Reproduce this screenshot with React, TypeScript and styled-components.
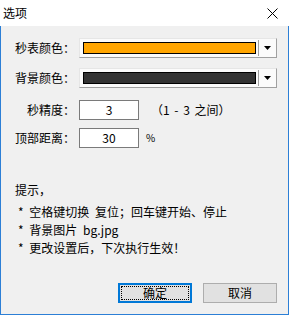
import React from "react";
import styled, { createGlobalStyle } from "styled-components";

const Global = createGlobalStyle`
  html, body { margin: 0; padding: 0; background: #f0f0f0; }
  body {
    font-family: "Noto Sans CJK SC", "Noto Sans", sans-serif;
    font-size: 12px;
    color: #000;
  }
`;

const Window = styled.div`
  width: 289px;
  height: 315px;
  display: flex;
  flex-direction: column;
  box-sizing: border-box;
  background: #fff;
  overflow: hidden;
`;

const TitleBar = styled.div`
  height: 26px;
  flex-shrink: 0;
  display: flex;
  align-items: center;
  justify-content: space-between;
  padding: 0 11px 0 3px;
  background: #fff;
`;

const Title = styled.span`
  font-size: 12px;
  line-height: 16px;
`;

const Client = styled.div`
  flex: 1;
  display: flex;
  flex-direction: column;
  background: #f0f0f0;
  border: 1px solid #2c7fd6;
  border-top: none;
  padding: 12px 11px 11px 14px;
`;

const Row = styled.div<{ $top: number }>`
  display: flex;
  align-items: center;
  height: 20px;
  margin-top: ${(p) => p.$top}px;
`;

const Label = styled.span`
  width: 60px;
  flex-shrink: 0;
  margin-right: 4px;
  text-align: right;
  line-height: 20px;
  white-space: nowrap;
`;

const Combo = styled.div`
  width: 198px;
  height: 20px;
  box-sizing: border-box;
  display: flex;
  align-items: center;
  padding: 3px 0 3px 3px;
  background: #fbfbfb;
  border: 1px solid #e6e6e6;
  border-right-color: #a0a0a0;
  border-bottom-color: #a0a0a0;
`;

const Swatch = styled.div<{ $color: string }>`
  width: 173px;
  height: 12px;
  box-sizing: border-box;
  border: 1px solid #000;
  background: ${(p) => p.$color};
  margin-right: 2px;
`;

const DropButton = styled.div`
  flex: 1;
  align-self: stretch;
  margin: -2px 0;
  border-left: 1px solid #a0a0a0;
  display: flex;
  align-items: center;
  justify-content: center;
`;

const Edit = styled.div`
  width: 60px;
  height: 20px;
  box-sizing: border-box;
  border: 1px solid #7a7a7a;
  background: #fff;
  text-align: center;
  line-height: 18px;
  flex-shrink: 0;
`;

const Note = styled.span<{ $gap: number; $size?: number }>`
  margin-left: ${(p) => p.$gap}px;
  font-size: ${(p) => p.$size ?? 12}px;
  line-height: 20px;
  white-space: pre;
  word-spacing: 2px;
`;

const Hints = styled.div`
  margin-top: 33px;
  display: flex;
  flex-direction: column;
`;

const HintHead = styled.div`
  line-height: 18px;
  margin-bottom: 4px;
`;

const HintLine = styled.div`
  line-height: 18px;
  padding-left: 3px;
  white-space: pre;
  word-spacing: 3px;
`;

const Footer = styled.div`
  margin-top: auto;
  display: flex;
  justify-content: flex-end;
  gap: 11px;
`;

const Button = styled.div<{ $focused?: boolean }>`
  position: relative;
  width: 74px;
  height: 20px;
  box-sizing: border-box;
  background: #e1e1e1;
  border: 1px solid ${(p) => (p.$focused ? "#0078d7" : "#adadad")};
  box-shadow: ${(p) => (p.$focused ? "inset 0 0 0 1px #0078d7" : "none")};
  display: flex;
  align-items: center;
  justify-content: center;
  line-height: 16px;
  &::after {
    content: "";
    display: ${(p) => (p.$focused ? "block" : "none")};
    position: absolute;
    inset: 2px;
    border: 1px dotted #000;
  }
`;

const Arrow = () => (
  <svg width="7" height="4" viewBox="0 0 7 4">
    <path d="M0 0H7L3.5 4Z" fill="#000" />
  </svg>
);

const CloseX = () => (
  <svg width="11" height="11" viewBox="0 0 11 11">
    <path d="M0.5 0.5L10.5 10.5M10.5 0.5L0.5 10.5" stroke="#000" strokeWidth="1" />
  </svg>
);

export default function App() {
  return (
    <>
      <Global />
      <Window>
        <TitleBar>
          <Title>选项</Title>
          <CloseX />
        </TitleBar>
        <Client>
          <Row $top={0}>
            <Label>秒表颜色：</Label>
            <Combo>
              <Swatch $color="#ffa500" />
              <DropButton>
                <Arrow />
              </DropButton>
            </Combo>
          </Row>
          <Row $top={10}>
            <Label>背景颜色：</Label>
            <Combo>
              <Swatch $color="#333333" />
              <DropButton>
                <Arrow />
              </DropButton>
            </Combo>
          </Row>
          <Row $top={12}>
            <Label>秒精度：</Label>
            <Edit>3</Edit>
            <Note $gap={12}>（1 - 3 之间）</Note>
          </Row>
          <Row $top={8}>
            <Label>顶部距离：</Label>
            <Edit>30</Edit>
            <Note $gap={7} $size={10}>%</Note>
          </Row>
          <Hints>
            <HintHead>提示，</HintHead>
            <HintLine>* 空格键切换 复位；回车键开始、停止</HintLine>
            <HintLine>* 背景图片 bg.jpg</HintLine>
            <HintLine>* 更改设置后，下次执行生效！</HintLine>
          </Hints>
          <Footer>
            <Button $focused>确定</Button>
            <Button>取消</Button>
          </Footer>
        </Client>
      </Window>
    </>
  );
}
